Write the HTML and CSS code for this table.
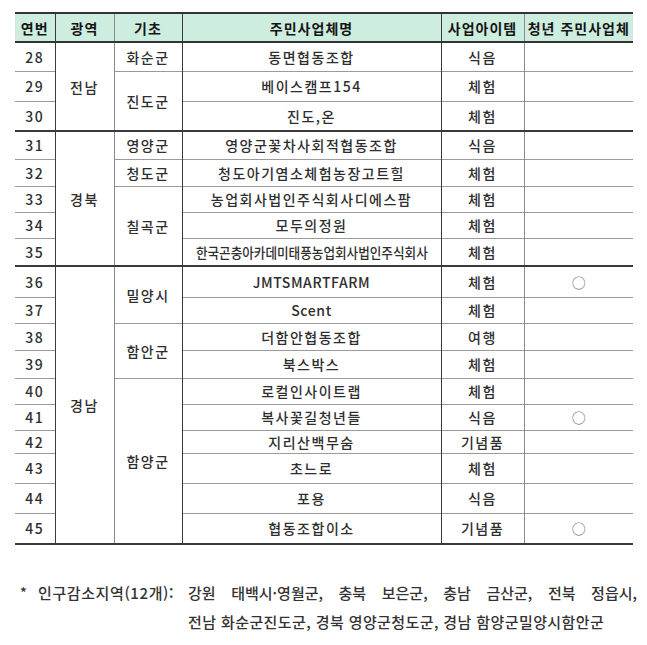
FILE: index.html
```html
<!DOCTYPE html>
<html lang="ko">
<head>
<meta charset="utf-8">
<title>주민사업체 목록</title>
<link rel="stylesheet" href="styles.css">
</head>
<body>
<table class="list">
  <colgroup>
    <col class="c-no"><col class="c-wide"><col class="c-base"><col class="c-name"><col class="c-item"><col class="c-youth">
  </colgroup>
  <thead>
    <tr class="head">
      <th class="sp-no v-dark">연번</th>
      <th class="v-gray">광역</th>
      <th class="v-dark">기초</th>
      <th class="v-dark sp-tight">주민사업체명</th>
      <th class="v-gray sp-item">사업아이템</th>
      <th class="sp-youth">청년 주민사업체</th>
    </tr>
  </thead>
  <tbody>
    <tr class="h29"><td class="v-dark">28</td><td class="v-gray" rowspan="3">전남</td><td class="v-dark">화순군</td><td class="v-dark name">동면협동조합</td><td class="v-gray">식음</td><td></td></tr>
    <tr class="h30"><td class="v-dark">29</td><td class="v-dark" rowspan="2">진도군</td><td class="v-dark name">베이스캠프154</td><td class="v-gray">체험</td><td></td></tr>
    <tr class="h30"><td class="v-dark">30</td><td class="v-dark name">진도,온</td><td class="v-gray">체험</td><td></td></tr>
    <tr class="h28 group"><td class="v-dark">31</td><td class="v-gray" rowspan="5">경북</td><td class="v-dark">영양군</td><td class="v-dark name">영양군꽃차사회적협동조합</td><td class="v-gray">식음</td><td></td></tr>
    <tr class="h27"><td class="v-dark">32</td><td class="v-dark">청도군</td><td class="v-dark name">청도아기염소체험농장고트힐</td><td class="v-gray">체험</td><td></td></tr>
    <tr class="h26"><td class="v-dark">33</td><td class="v-dark" rowspan="3">칠곡군</td><td class="v-dark name">농업회사법인주식회사디에스팜</td><td class="v-gray">체험</td><td></td></tr>
    <tr class="h26"><td class="v-dark">34</td><td class="v-dark name">모두의정원</td><td class="v-gray">체험</td><td></td></tr>
    <tr class="h28"><td class="v-dark">35</td><td class="v-dark name"><span class="squeeze">한국곤충아카데미태풍농업회사법인주식회사</span></td><td class="v-gray">체험</td><td></td></tr>
    <tr class="h31 group"><td class="v-dark">36</td><td class="v-gray" rowspan="10">경남</td><td class="v-dark" rowspan="2">밀양시</td><td class="v-dark name latin">JMTSMARTFARM</td><td class="v-gray">체험</td><td class="mark">○</td></tr>
    <tr class="h26"><td class="v-dark">37</td><td class="v-dark name latin">Scent</td><td class="v-gray">체험</td><td></td></tr>
    <tr class="h27"><td class="v-dark">38</td><td class="v-dark" rowspan="2">함안군</td><td class="v-dark name">더함안협동조합</td><td class="v-gray">여행</td><td></td></tr>
    <tr class="h28"><td class="v-dark">39</td><td class="v-dark name">북스박스</td><td class="v-gray">체험</td><td></td></tr>
    <tr class="h26"><td class="v-dark">40</td><td class="v-dark" rowspan="6">함양군</td><td class="v-dark name">로컬인사이트랩</td><td class="v-gray">체험</td><td></td></tr>
    <tr class="h26"><td class="v-dark">41</td><td class="v-dark name">복사꽃길청년들</td><td class="v-gray">식음</td><td class="mark">○</td></tr>
    <tr class="h23"><td class="v-dark">42</td><td class="v-dark name">지리산백무숨</td><td class="v-gray">기념품</td><td></td></tr>
    <tr class="h30"><td class="v-dark">43</td><td class="v-dark name">초느로</td><td class="v-gray">체험</td><td></td></tr>
    <tr class="h30"><td class="v-dark">44</td><td class="v-dark name">포용</td><td class="v-gray">식음</td><td></td></tr>
    <tr class="h31"><td class="v-dark">45</td><td class="v-dark name">협동조합이소</td><td class="v-gray">기념품</td><td class="mark">○</td></tr>
  </tbody>
</table>

<div class="note">
  <span class="star">*</span>
  <span class="label">인구감소지역(12개):</span>
  <div class="body">
    <div class="line first">강원 태백시·영월군, 충북 보은군, 충남 금산군, 전북 정읍시,</div>
    <div class="line">전남 화순군진도군, 경북 영양군청도군, 경남 함양군밀양시함안군</div>
  </div>
</div>
</body>
</html>
```

FILE: styles.css
```css
html, body {
  margin: 0;
  padding: 0;
  background: #ffffff;
}

body {
  width: 647px;
  font-family: "Noto Sans CJK KR", "Noto Sans", sans-serif;
  color: #2e2e2e;
}

.list {
  margin: 12px 0 0 15px;
  width: 618px;
  border-collapse: collapse;
  table-layout: fixed;
  border-top: 2px solid #333333;
  border-bottom: 2px solid #3a3a3a;
}

.c-no { width: 40px; }
.c-wide { width: 59px; }
.c-base { width: 68px; }
.c-name { width: 259px; }
.c-item { width: 83px; }
.c-youth { width: 109px; }

.list th,
.list td {
  padding: 0;
  text-align: center;
  vertical-align: middle;
  font-size: 14px;
  line-height: 18px;
  white-space: nowrap;
  overflow: visible;
}

.head {
  height: 29px;
  background: #cdeedf;
}

.head th {
  font-weight: 700;
  color: #151515;
  letter-spacing: 1px;
  border-bottom: 2px solid #333333;
}

.sp-no { letter-spacing: 3px; }
.sp-tight { letter-spacing: 0.2px; }
.sp-item { letter-spacing: 1.2px; }
.sp-youth { letter-spacing: -1px; }

.list td {
  letter-spacing: 1.5px;
  font-weight: 500;
  color: #2e2e2e;
  border-top: 1px solid #9a9a9a;
}

.list td.v-dark { border-right: 1px solid #3a3a3a; }
.list td.v-gray,
.list th.v-gray { border-right: 1px solid #8a8a8a; }
.list th.v-dark { border-right: 1px solid #3a3a3a; }

.list tr.group td { border-top: 2px solid #3a3a3a; }

.h23 { height: 23px; }
.h26 { height: 26px; }
.h27 { height: 27px; }
.h28 { height: 28px; }
.h29 { height: 29px; }
.h30 { height: 30px; }
.h31 { height: 31px; }

.name { letter-spacing: 1.5px; }
.list td.latin { letter-spacing: 0.6px; }

.squeeze {
  display: inline-block;
  letter-spacing: 0;
  transform: scaleX(0.9);
}

.list td.mark {
  color: #666666;
  letter-spacing: 0;
  font-weight: 400;
  font-size: 14px;
}

.note {
  display: flex;
  align-items: flex-start;
  margin-top: 33px;
  font-size: 15px;
  line-height: 29px;
  font-weight: 500;
  color: #333333;
}

.star {
  width: 18px;
  margin-left: 20px;
  font-size: 14px;
}

.label {
  width: 150px;
  white-space: nowrap;
  letter-spacing: 0.6px;
}

.body {
  width: 449px;
}

.line {
  white-space: nowrap;
  letter-spacing: 0.4px;
}

.line.first {
  white-space: normal;
  text-align: justify;
  text-align-last: justify;
  letter-spacing: 0;
}
```
